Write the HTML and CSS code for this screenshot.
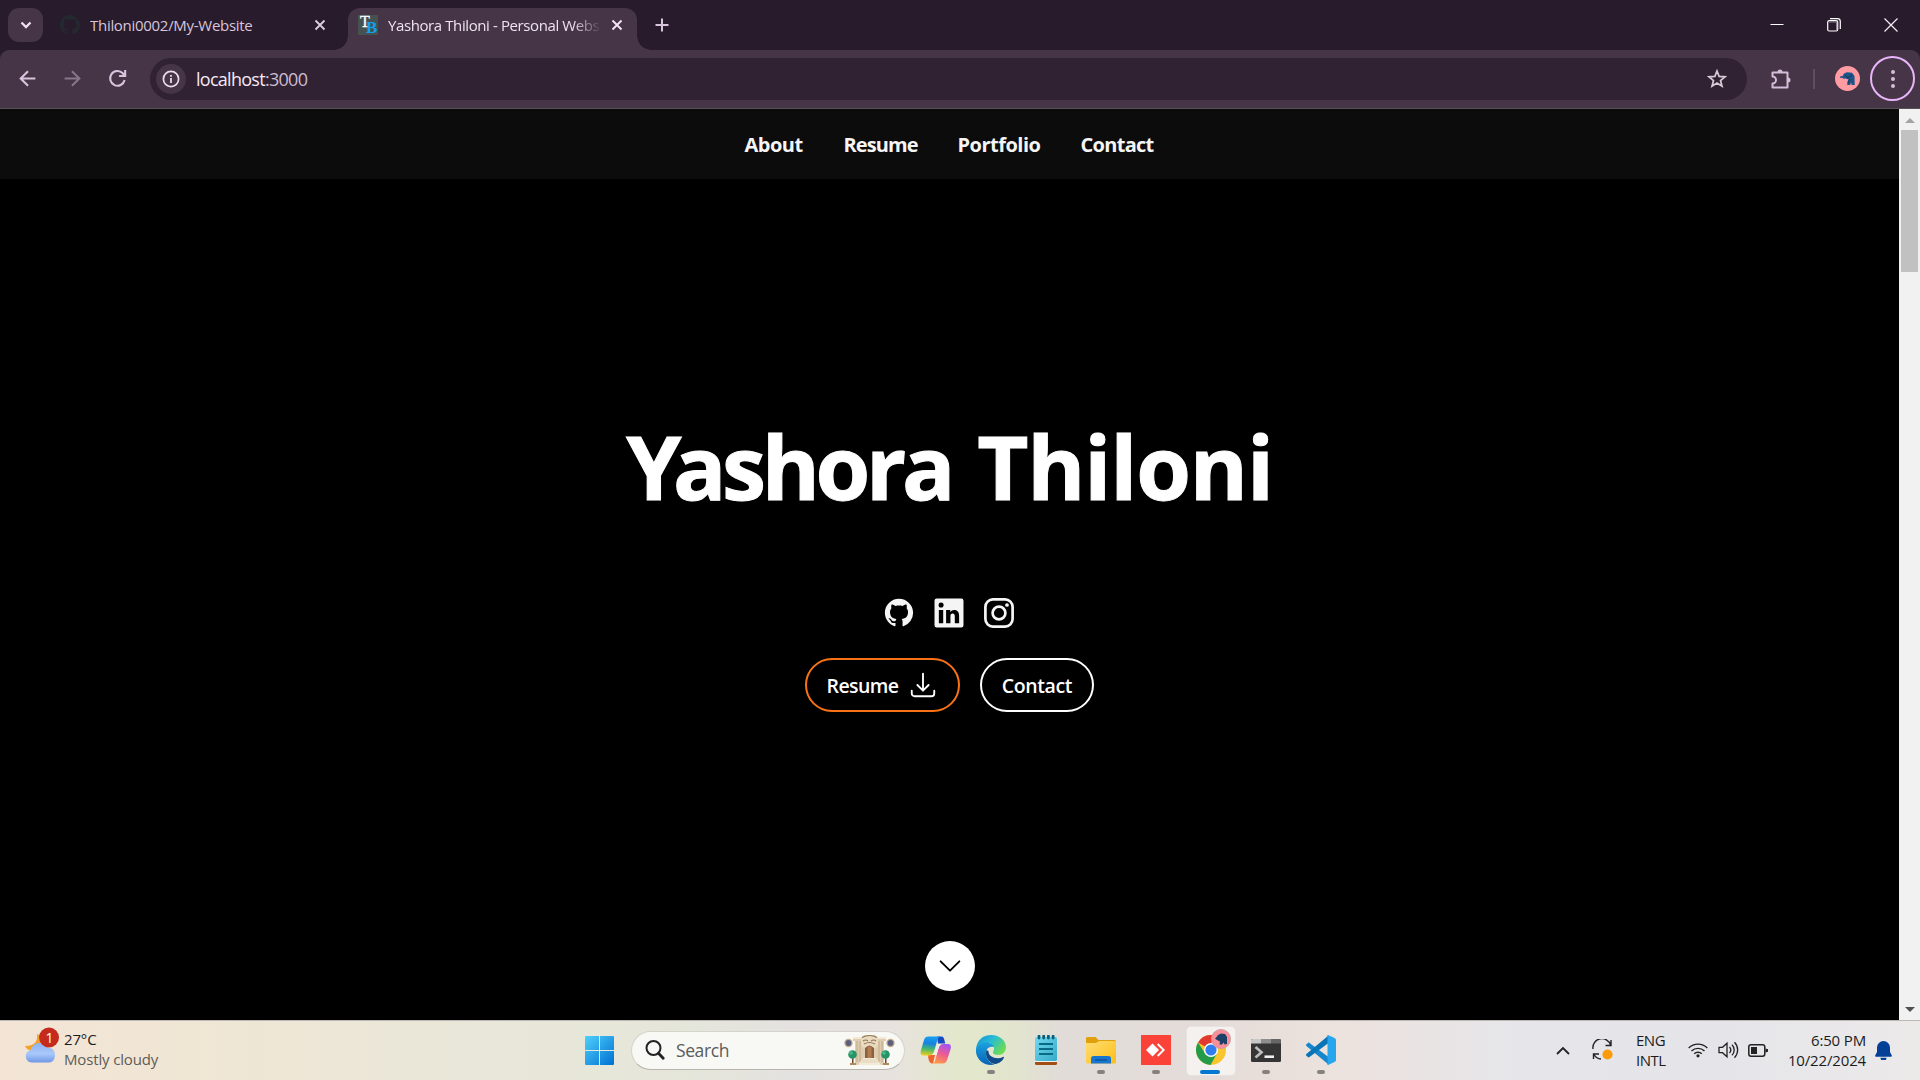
FILE: index.html
```
<!DOCTYPE html>
<html lang="en">
<head>
<meta charset="utf-8">
<title>Yashora Thiloni - Personal Website</title>
<link rel="stylesheet" href="styles.css">
</head>
<body>
<div class="screen">
  <div class="tabstrip">
    <div class="tab-search"><svg width="12" height="8" viewBox="0 0 12 8"><path d="M1.5 1.5 6 6l4.500-4.500" fill="none" stroke="#efe0f0" stroke-width="2.300"/></svg></div>
    <div class="tab">
      <svg class="favicon" viewBox="0 0 16 16"><path fill="#24292f" d="M8 0C3.580 0 0 3.580 0 8c0 3.540 2.290 6.530 5.470 7.590.4.070.550-.170.550-.380 0-.190-.010-.820-.010-1.490-2.010.370-2.530-.490-2.690-.940-.090-.230-.480-.940-.820-1.130-.280-.150-.680-.520-.010-.530.630-.010 1.080.580 1.230.820.720 1.210 1.870.870 2.330.660.070-.520.280-.870.510-1.070-1.780-.2-3.640-.890-3.640-3.950 0-.870.310-1.590.820-2.150-.080-.2-.360-1.020.080-2.120 0 0 .670-.210 2.200.820.640-.180 1.320-.270 2-.270s1.360.090 2 .270c1.530-1.040 2.200-.820 2.200-.820.440 1.100.160 1.920.080 2.120.510.560.820 1.270.820 2.150 0 3.070-1.870 3.750-3.650 3.950.290.250.540.730.540 1.480 0 1.070-.010 1.930-.010 2.200 0 .210.150.460.550.380A8.010 8.010 0 0016 8c0-4.420-3.580-8-8-8z"/></svg>
      <span class="tab-title">Thiloni0002/My-Website</span>
      <svg class="tab-close" viewBox="0 0 12 12"><path d="M1.500 1.500l9 9M10.500 1.500l-9 9" stroke="#dccbe0" stroke-width="1.900"/></svg>
    </div>
    <div class="tab tab-active">
      <div class="favicon tb"><span class="tb-t">T</span><span class="tb-b">B</span></div>
      <span class="tab-title">Yashora Thiloni - Personal Webs</span>
      <svg class="tab-close" viewBox="0 0 12 12"><path d="M1.500 1.500l9 9M10.500 1.500l-9 9" stroke="#f4e6f4" stroke-width="1.900"/></svg>
    </div>
    <svg class="tab-new" viewBox="0 0 14 14"><path d="M7 .5v13M.5 7h13" stroke="#d8c4dc" stroke-width="2"/></svg>
    <div class="win-controls">
      <svg width="14" height="14" viewBox="0 0 14 14"><path d="M.5 6.500h13" stroke="#fff" stroke-width="1"/></svg>
      <svg width="14" height="14" viewBox="0 0 14 14" fill="none" stroke="#fff" stroke-width="1.200"><rect x=".7" y="2.700" width="10" height="10.300" rx="1.500"/><path d="M3 .7h7.500a2.800 2.800 0 012.800 2.800V11"/><path d="M2 4h7.600v8" stroke="#8d8190"/></svg>
      <svg width="14" height="14" viewBox="0 0 14 14"><path d="M.5.5l13 13M13.500.5l-13 13" stroke="#f4eef4" stroke-width="1.200"/></svg>
    </div>
  </div>

  <div class="toolbar">
    <svg class="tool" viewBox="0 0 20 20" fill="none" stroke="#d8c4dc" stroke-width="2"><path d="M17.500 10H4M10.500 3L3.500 10l7 7"/></svg>
    <svg class="tool" viewBox="0 0 20 20" fill="none" stroke="#86768a" stroke-width="2"><path d="M2.500 10H16M9.500 3l7 7-7 7"/></svg>
    <svg class="tool" viewBox="0 0 20 20" fill="none" stroke="#d8c4dc" stroke-width="2"><path d="M16.800 11.500A7 7 0 1115 5l1.700 2.200M17.300 2v5.600h-5.800"/></svg>
    <div class="omnibox">
      <div class="site-info"><svg width="18" height="18" viewBox="0 0 18 18"><circle cx="9" cy="9" r="7.600" fill="none" stroke="#eadcec" stroke-width="1.700"/><path d="M9 8v5M9 5v1.800" stroke="#eadcec" stroke-width="1.800"/></svg></div>
      <span class="url">localhost<span class="port">:3000</span></span>
      <svg class="star" viewBox="0 0 20 20"><path d="M10 2l2.100 5.400 5.900.4-4.500 3.700 1.500 5.700-5-3.200-5 3.200 1.500-5.700L2 7.800l5.900-.4z" fill="none" stroke="#d8cbd9" stroke-width="1.700"/></svg>
    </div>
    <svg class="puzzle" viewBox="0 0 22 22"><path d="M2.500 4.500h15v15h-15v-4a3.300 3.300 0 000-7z" fill="none" stroke="#d3bdd8" stroke-width="2" stroke-linejoin="round"/><path d="M7.500 4a2.500 2.500 0 015 0zM18 9.500a2.500 2.500 0 010 5z" fill="#d3bdd8"/></svg>
    <i class="separator"></i>
    <svg class="avatar" viewBox="0 0 25 25"><circle cx="12.500" cy="12.500" r="12.500" fill="#ff9ca3"/><path d="M5 12l.5-2 2 .3L9 7.500l3-1.300 5 .6 2.500 3.200.2 9h-3l-.7-2.500-.8 2.500h-3l.3-3.500 1-2-3-1-2 .2-1.500-1z" fill="#1c5487"/><path d="M10 9l3 3 4-3M13 17l2-4" fill="none" stroke="#143454"/></svg>
    <div class="menu"><i></i><i></i><i></i></div>
  </div>

  <div class="viewport">
    <div class="page">
      <nav class="nav">
        <a class="n1">About</a><a class="n2">Resume</a><a class="n3">Portfolio</a><a class="n4">Contact</a>
      </nav>
      <main class="hero">
        <h1><span class="initial">Y</span><span class="first">ashora</span> <span class="last">Thiloni</span></h1>
        <div class="socials">
          <svg width="30" height="30" viewBox="-.500 -.400 17 17"><path fill="#f5f5f5" d="M8 0C3.580 0 0 3.580 0 8c0 3.540 2.290 6.530 5.470 7.590.4.070.550-.170.550-.380 0-.190-.010-.820-.010-1.490-2.010.370-2.530-.490-2.690-.940-.090-.230-.480-.940-.820-1.130-.280-.150-.680-.520-.010-.530.630-.010 1.080.580 1.230.820.720 1.210 1.870.870 2.330.660.070-.520.280-.870.510-1.070-1.780-.2-3.640-.890-3.640-3.950 0-.870.310-1.590.820-2.150-.080-.2-.360-1.020.080-2.120 0 0 .670-.210 2.200.820.640-.180 1.320-.270 2-.270s1.360.090 2 .270c1.530-1.040 2.200-.820 2.200-.820.440 1.100.160 1.920.080 2.120.510.560.820 1.270.820 2.150 0 3.070-1.870 3.750-3.650 3.950.290.250.540.730.540 1.480 0 1.070-.010 1.930-.010 2.200 0 .210.150.460.550.380A8.010 8.010 0 0016 8c0-4.420-3.580-8-8-8z"/></svg>
          <svg width="30" height="30" viewBox="1.650 1.650 20.700 20.700"><path fill="#f5f5f5" d="M20.500 2h-17A1.500 1.500 0 002 3.500v17A1.500 1.500 0 003.500 22h17a1.500 1.500 0 001.500-1.500v-17A1.500 1.500 0 0020.500 2zM8 19H5v-9h3zM6.500 8.250A1.750 1.750 0 118.300 6.500a1.780 1.780 0 01-1.800 1.750zM19 19h-3v-4.740c0-1.420-.6-1.930-1.380-1.930A1.740 1.740 0 0013 14.190V19h-3v-9h2.900v1.300a3.110 3.110 0 012.700-1.400c1.550 0 3.360.860 3.360 3.660z"/></svg>
          <svg width="30" height="30" viewBox="0 0 30 30" fill="none" stroke="#f5f5f5" stroke-width="2.700"><rect x="1.400" y="1.400" width="27.200" height="27.200" rx="7.500"/><circle cx="15" cy="15" r="6.400"/><circle cx="23" cy="7" r="1.850" fill="#f5f5f5" stroke="none"/></svg>
        </div>
        <div class="actions">
          <a class="btn btn-resume">Resume <svg width="30" height="30" viewBox="0 0 24 24" fill="none" stroke="#fff" stroke-width="1.500" stroke-linecap="round" stroke-linejoin="round"><path d="M3 16.500v2.250A2.250 2.250 0 005.250 21h13.500A2.250 2.250 0 0021 18.750V16.500M16.500 12L12 16.500 7.500 12M12 16.500V3"/></svg></a>
          <a class="btn btn-contact">Contact</a>
        </div>
        <a class="scroll-down"><svg width="30" height="30" viewBox="0 0 24 24" fill="none" stroke="#000" stroke-width="1.500" stroke-linecap="round" stroke-linejoin="round"><path d="M19.500 8.250l-7.500 7.500-7.500-7.500"/></svg></a>
      </main>
    </div>
    <div class="scrollbar">
      <div class="sb-arrow"><svg width="10" height="5" viewBox="0 0 10 5"><path d="M0 5l5-5 5 5z" fill="#a3a3a3"/></svg></div>
      <div class="sb-thumb"></div>
      <div class="sb-arrow sb-down"><svg width="10" height="5" viewBox="0 0 10 5"><path d="M0 0l5 5 5-5z" fill="#505050"/></svg></div>
    </div>
  </div>

  <div class="taskbar">
    <div class="weather">
      <svg width="35" height="38" viewBox="0 0 35 38">
        <defs><linearGradient id="cloud" x1="0" y1="0" x2="0" y2="1"><stop offset="0" stop-color="#8fb2f3"/><stop offset=".55" stop-color="#a9c8fa"/><stop offset="1" stop-color="#6f97e6"/></linearGradient></defs>
        <path d="M12 7c1 8-3 12-12 12 2 5 9 7 14 2s4-12-2-14z" fill="#f3a32b"/>
        <path d="M6.500 35.500a6.200 6.200 0 01-1-12.200C7 18.500 10.500 16 15 16c4 0 7 2 8.500 5 4-.6 6.500 3 6.500 7 0 4.500-2.500 7.500-6 7.500z" fill="url(#cloud)"/>
        <circle cx="24" cy="10.500" r="10" fill="#c42b1c"/>
        <text x="24.500" y="15.500" text-anchor="middle" class="badge-num">1</text>
      </svg>
      <div class="weather-text"><span>27°C</span><span class="muted">Mostly cloudy</span></div>
    </div>

    <div class="dock">
      <div class="cell"><svg width="29" height="29" viewBox="0 0 29 29"><defs><linearGradient id="win" gradientUnits="userSpaceOnUse" x1="0" y1="0" x2="29" y2="29"><stop offset="0" stop-color="#4fd0fb"/><stop offset="1" stop-color="#0070d2"/></linearGradient></defs><path d="M1 0h13v14H0V1a1 1 0 011-1zM15 0h13a1 1 0 011 1v13H15zM0 15h14v14H1a1 1 0 01-1-1zM15 15h14v13a1 1 0 01-1 1H15z" fill="url(#win)"/></svg></div>
      <div class="search">
        <svg class="lens" viewBox="0 0 20 20" fill="none" stroke="#222" stroke-width="2"><circle cx="8.500" cy="8" r="7"/><path d="M13.500 13.200l4.700 5" stroke-width="2.800" stroke-linecap="round"/></svg>
        <span>Search</span>
        <svg class="temple" viewBox="0 0 52 32">
          <circle cx="4.500" cy="9" r="4.200" fill="#c9ab85"/><circle cx="4.500" cy="9" r="2.900" fill="#5a5f80"/>
          <circle cx="46.500" cy="9" r="4.200" fill="#c9ab85"/><circle cx="46.500" cy="9" r="2.900" fill="#5a5f80"/>
          <path d="M9 3h9l2-2h11l2 2h9v4h-2v24H11V7H9z" fill="#decdb0"/>
          <path d="M9 3h9v2H9zM33 3h9v2h-9z" fill="#f3e8d2"/>
          <path d="M13 7v21M16 7v21M35 7v21M38 7v21" stroke="#c3aa88" stroke-width="1"/>
          <path d="M17 4q8.500-4 17 0v7q-2 4-4 3V24h-9V14q-2 0-4-3z" fill="#eadbc0"/>
          <path d="M18 3.500q7.500-4 15 0M19 7q3-2 5 0M27 7q3-2 5 0M20 10q5.500-3 11 0" fill="none" stroke="#917958" stroke-width="1.200"/>
          <path d="M21 24V14q4.500-5 9 0v10z" fill="#8d6040"/><path d="M23.500 24V12.500h4V24z" fill="#b07c52"/>
          <path d="M19 24h13l5 7H14z" fill="#f4ead8"/><path d="M18 26h15M17 28h17" stroke="#ddcbae" stroke-width=".8"/>
          <path d="M8 22h1.500v8H8zM41 22h1.500v8H41z" fill="#6b482c"/><path d="M6 29h6v2H6zM39 29h6v2h-6z" fill="#ae8a5c"/>
          <circle cx="8.500" cy="20.500" r="4.300" fill="#279467"/><circle cx="41.500" cy="20.500" r="4.300" fill="#279467"/><circle cx="7" cy="19" r="1.800" fill="#45bb87"/><circle cx="40" cy="19" r="1.800" fill="#45bb87"/>
        </svg>
      </div>
      <div class="apps">
        <div class="cell"><svg width="31" height="30" viewBox="0 0 31 30"><defs><linearGradient id="cp1" x1=".3" y1="0" x2=".2" y2="1"><stop offset="0" stop-color="#189fef"/><stop offset=".35" stop-color="#1783df"/><stop offset=".65" stop-color="#48b86b"/><stop offset="1" stop-color="#f4cf1c"/></linearGradient><linearGradient id="cp2" x1=".7" y1="0" x2=".3" y2="1"><stop offset="0" stop-color="#a452f0"/><stop offset=".5" stop-color="#ee5c91"/><stop offset="1" stop-color="#ff9a45"/></linearGradient></defs>
          <path d="M17 1.500h4.500c2 0 2.500 2 3 4l.8 3H18z" fill="#1749c2"/><path d="M8 20h7l-2 8.500c-3 0-4-2-4.600-5z" fill="#f2622d"/>
          <path d="M8.500 1.500H21c-2 0-3 1.300-3.600 3.500L14 16.500c-.8 2.700-2 4-5 4H3.500C.5 20.500.2 18 1 15L4 5c.8-2.500 2-3.500 4.500-3.500z" fill="url(#cp1)"/>
          <path d="M22.500 28.500H12c2 0 2.700-1.300 3.300-3.500L18.500 13c.8-2.700 2-4 5-4H28c3 0 3.300 2.500 2.500 5.500L27 25c-.8 2.500-2 3.500-4.500 3.500z" fill="url(#cp2)"/><path d="M17.500 9.500h4c-1.700.7-2.400 2-3 4l-2 6.500h-5c1.700-.7 2.400-2 3-4z" fill="#f1eee6"/></svg></div>
        <div class="cell"><svg width="30" height="30" viewBox="0 0 30 30"><defs><linearGradient id="ed1" x1="0" y1="0" x2="1" y2=".6"><stop offset="0" stop-color="#168fd6"/><stop offset=".5" stop-color="#27bcd3"/><stop offset="1" stop-color="#6bdc54"/></linearGradient><linearGradient id="ed2" x1="0" y1="0" x2="0" y2="1"><stop offset="0" stop-color="#1aa1df"/><stop offset="1" stop-color="#0863b8"/></linearGradient></defs>
          <path d="M0 14C1 5 7 0 15 0c9 0 15 6 15 12 0 5-3.500 8-8 8-3 0-5-1-5-2.500 0-1 1-1.500 1-4C18 10 14 8 10 8c-5 0-9 3-10 6z" fill="url(#ed1)"/>
          <path d="M0 14c1-4 5-6.500 9.500-6.500 3.500 0 7.500 1.500 8.500 4.500-5-1-8 2-8 6 0 6 4.500 11 9 11.500C8 32-1 24 0 14z" fill="url(#ed2)"/>
          <path d="M10.500 15C8 23 15 29.500 20 29c3.500-.8 7-3.500 8-6.500.2-.7-.3-.8-1-.4-6 3-15 0-14.500-6z" fill="#114a8b"/></svg><i class="run"></i></div>
        <div class="cell"><svg width="22" height="30" viewBox="0 0 22 30"><defs><linearGradient id="np" x1="0" y1="0" x2="1" y2="1"><stop offset="0" stop-color="#73d8ee"/><stop offset="1" stop-color="#35abc9"/></linearGradient></defs><path d="M0 26h22v2.500a1.500 1.500 0 01-1.500 1.500h-19A1.500 1.500 0 010 28.500z" fill="#a34e13"/><path d="M0 25h22v2H0z" fill="#f2f2f2"/><rect y="2" width="22" height="24" rx="1.500" fill="url(#np)"/><path d="M4 9h14M4 14h14M4 19h14" stroke="#096a83" stroke-width="2"/><path d="M4 1v2M8.700 1v2M13.400 1v2M18.100 1v2" stroke="#08607a" stroke-width="2.800" stroke-linecap="round"/></svg></div>
        <div class="cell"><svg width="30" height="30" viewBox="0 0 30 30"><defs><linearGradient id="fo" x1="0" y1="0" x2="1" y2="1"><stop offset="0" stop-color="#ffdd73"/><stop offset="1" stop-color="#fcbe16"/></linearGradient></defs><path d="M0 3.500A1.500 1.500 0 011.500 2h8l3 3H29l1 2v5H0z" fill="#dfa00b"/><path d="M0 8h10l3-2h15.500A1.500 1.500 0 0130 7.500V27a1.500 1.500 0 01-1.500 1.500h-27A1.500 1.500 0 010 27z" fill="url(#fo)"/><path d="M5 28.500v-5a2.500 2.500 0 012.500-2.500h15a2.500 2.500 0 012.500 2.500v5z" fill="#1777d0"/><path d="M9 25h12" stroke="#0c4e94" stroke-width="1.300"/></svg><i class="run"></i></div>
        <div class="cell"><svg width="30" height="30" viewBox="0 0 30 30"><path d="M0 0h30v30H0z" fill="#fb4238"/><path d="M11.500 8.500L18 15l-6.500 6.500L5 15z" fill="#fff"/><path d="M16 9.700l1.300-1.400L24 15l-6.700 6.700-1.300-1.400L21.300 15z" fill="#fff"/></svg><i class="run"></i></div>
        <div class="cell active"><svg width="30" height="30" viewBox="0 0 30 30"><circle cx="15" cy="15" r="15" fill="#f9c52d"/><path d="M15 15L2 7.500A15 15 0 0128 7.500H15z" fill="#e1392f"/><path d="M2 7.500A15 15 0 0014.500 30l6.500-11.500-12-.2z" fill="#249b48"/><circle cx="15" cy="15" r="7" fill="#fff"/><circle cx="15" cy="15" r="5.600" fill="#2f7def"/></svg>
          <svg class="chrome-badge" viewBox="0 0 20 20"><circle cx="10" cy="10" r="9.600" fill="#f98f99" stroke="#c89a9f" stroke-width=".8"/><path d="M4 9.500l1.500-1.500L7 6l3-1.500 4 .5 2 3v7l-2.500.5-.8-2L11 15.500H8.500L9 12.500 6 11z" fill="#1d4166"/></svg><i class="run run-wide"></i></div>
        <div class="cell"><svg width="30" height="23" viewBox="0 0 30 23"><rect width="30" height="23" rx="1.500" fill="#353535"/><path d="M1.500 0H10v4.500H0v-3A1.500 1.500 0 011.500 0z" fill="#c7c7c7"/><path d="M10 0h10v4.500H10z" fill="#8e8e8e"/><path d="M20 0h8.500A1.500 1.500 0 0130 1.500v3H20z" fill="#666"/><path d="M4.500 8l6 5.300-6 5.300" fill="none" stroke="#bcbcbc" stroke-width="2.700"/><path d="M13.500 17.700H23" stroke="#f2f2f2" stroke-width="2.600"/></svg><i class="run"></i></div>
        <div class="cell"><svg width="30" height="30" viewBox="0 0 30 30"><path d="M.4 11c-.5-.6-.5-1.200 0-1.700L2 7.900c.5-.5 1-.4 1.500 0L22.500 22v7.500z" fill="#1687ce"/><path d="M.4 19c-.5.6-.5 1.200 0 1.700L2 22.100c.5.500 1 .4 1.500 0L22.500 8V.5z" fill="#0875b8"/><path d="M22 0l6.500 3A2.500 2.500 0 0130 5v20a2.500 2.500 0 01-1.500 2L22 30c-.8-.2-1-1-.5-2V2c-.5-1-.3-1.800.5-2z" fill="#27a5ed"/></svg><i class="run"></i></div>
      </div>
    </div>

    <div class="tray">
      <svg class="t-chev" width="14" height="9" viewBox="0 0 14 9"><path d="M1 8l6-6 6 6" fill="none" stroke="#222" stroke-width="1.800"/></svg>
      <svg class="t-sync" width="22" height="22" viewBox="0 0 22 22"><path d="M1 10A9 9 0 0118.500 6M19 1v5.500h-5.500M1.500 20v-5H7M2 15.500a9 9 0 007 4.500" fill="none" stroke="#222" stroke-width="1.400"/><circle cx="15.500" cy="15.500" r="5.100" fill="#fb9a0a"/></svg>
      <div class="lang"><span class="eng">ENG</span><span class="intl">INTL</span></div>
      <svg class="t-wifi" width="20" height="16" viewBox="0 0 20 16" fill="none" stroke="#222" stroke-width="1.400"><path d="M.7 6a13.200 13.200 0 0118.600 0M3.500 9a9.300 9.300 0 0113 0M6.200 11.800a5.400 5.400 0 017.600 0"/><circle cx="10" cy="13.800" r="1.600" fill="#222" stroke="none"/></svg>
      <svg class="t-vol" width="21" height="18" viewBox="0 0 21 18" fill="none" stroke="#222" stroke-width="1.300"><path d="M1 6.300h3.500l4.500-4v13.400l-4.500-4H1zM11.500 6a4.500 4.500 0 010 6M14 3.700a7.500 7.500 0 010 10.600M16.500 1.300a11 11 0 010 15.400"/></svg>
      <svg class="t-bat" width="20" height="13" viewBox="0 0 20 13"><rect x=".8" y=".8" width="16" height="11.400" rx="2.200" fill="none" stroke="#222" stroke-width="1.500"/><path d="M3 3h6v7H3zM17.500 4.500l2.500.7v2.600l-2.500.7z" fill="#222"/></svg>
      <div class="clock"><span class="time">6:50 PM</span><span class="date">10/22/2024</span></div>
      <svg class="t-bell" width="17" height="19" viewBox="0 0 17 19"><path d="M8.500 0a6.500 6.500 0 016.500 6.500V11l1.800 3.500c.2.700-.1 1.200-.8 1.200H1c-.7 0-1-.5-.8-1.200L2 11V6.500A6.500 6.500 0 018.500 0zM5.500 16.800h6a3 3 0 01-6 0z" fill="#043f98"/></svg>
    </div>
  </div>
</div>
</body>
</html>
```
FILE: styles.css
```
* { box-sizing: border-box; }
body { margin: 0; overflow: hidden; background: #000; font-family: "Open Sans", "Noto Sans", sans-serif; }
svg { display: block; flex: none; }
.screen { display: flex; flex-direction: column; width: 1920px; height: 1080px; background: linear-gradient(#281b2b 80px, #000 80px); }

/* Tab strip */
.tabstrip { display: flex; align-items: center; height: 50px; padding-left: 8px; background: #281b2b; }
.tab-search { display: flex; align-items: center; justify-content: center; width: 35px; height: 34px; border-radius: 11px; background: #453547; }
.tab { display: flex; align-items: center; height: 42px; width: 298px; margin-left: 7px; padding: 0 22px 0 10px; }
.favicon { width: 20px; height: 20px; flex: none; }
.tab-title { flex: 1; margin-left: 10px; overflow: hidden; white-space: nowrap; font-size: 15px; line-height: 20px; letter-spacing: -.29px; color: #d8c4dc; }
.tab-close { width: 12px; height: 12px; }
.tab-active { position: relative; align-self: flex-end; width: 289px; margin-left: 0; padding-right: 14px; border-radius: 12px 12px 0 0; background: #453547; }
.tab-active::before, .tab-active::after { content: ""; position: absolute; bottom: 0; width: 14px; height: 14px; }
.tab-active::before { left: -14px; background: radial-gradient(circle at 0 0, transparent 13.500px, #453547 14px); }
.tab-active::after { right: -14px; background: radial-gradient(circle at 100% 0, transparent 13.500px, #453547 14px); }
.tab-active > * { transform: translateY(-4px); }
.tab-active .tab-title { margin-right: 7px; letter-spacing: -.4px; color: #efe2f0; -webkit-mask-image: linear-gradient(90deg, #000 85%, transparent 99%); mask-image: linear-gradient(90deg, #000 85%, transparent 99%); }
.tb { position: relative; background: #465250; font-family: "Liberation Serif", serif; }
.tb-t, .tb-b { position: absolute; line-height: 16px; }
.tb-t { left: 2px; top: -1px; font-size: 16px; color: #fff; -webkit-text-stroke: .3px #fff; }
.tb-b { left: 8px; top: 5px; font-size: 17px; font-weight: bold; color: #159df0; }
.tab-new { width: 14px; height: 14px; margin-left: 18px; }
.win-controls { display: flex; gap: 43px; margin-left: auto; margin-right: 22px; }

/* Toolbar */
.toolbar { display: flex; align-items: center; height: 59px; padding: 0 5px 1px 17px; background: #453547; border-bottom: 1px solid #575057; border-radius: 9px 9px 0 0; }
.tool { width: 21px; height: 21px; margin-right: 24px; }
.omnibox { display: flex; align-items: center; width: 1597px; height: 42px; margin-left: -2px; padding: 0 20px 0 6px; border-radius: 21px; background: #302232; }
.site-info { display: flex; align-items: center; justify-content: center; width: 30px; height: 30px; border-radius: 50%; background: #453547; }
.url { margin-left: 10px; font-size: 18px; line-height: 24px; letter-spacing: -.72px; color: #f4e9f5; }
.port { color: #cdbbd0; }
.star { width: 20px; height: 20px; margin-left: auto; }
.puzzle { width: 22px; height: 22px; margin-left: 23px; }
.separator { width: 2px; height: 20px; margin-left: 21px; background: #5f4d63; }
.avatar { width: 25px; height: 25px; margin-left: 20px; }
.menu { display: flex; flex-direction: column; align-items: center; justify-content: center; gap: 3px; width: 45px; height: 45px; margin-left: auto; border: 2px solid #e9b5fa; border-radius: 50%; }
.menu i { width: 4px; height: 4px; border-radius: 50%; background: #d3bdd8; }

/* Page */
.viewport { display: flex; height: 911px; }
.page { display: flex; flex-direction: column; flex: 1; background: #000; color: #fff; }
.nav { display: flex; justify-content: center; gap: 40px; height: 70px; padding-top: 1px; background: #0c0c0c; color: #f5f5f5; font-size: 20px; font-weight: 700; line-height: 70px; white-space: nowrap; }
.nav a { letter-spacing: -.5px; }
.nav .n2 { letter-spacing: -.9px; }
.nav .n4 { letter-spacing: -.7px; }
.n1 { width: 59px; } .n2 { width: 74px; } .n3 { width: 83px; } .n4 { width: 74px; }
.hero { display: flex; flex-direction: column; align-items: center; flex: 1; padding: 242px 0 29px; }
h1 { margin: 0; font-size: 88.500px; font-weight: 700; line-height: 90px; letter-spacing: -2px; word-spacing: 5px; white-space: nowrap; -webkit-text-stroke: 1px #fff; }
.initial { letter-spacing: -8.500px; }
.first { letter-spacing: -4.300px; }
.last { letter-spacing: -1.100px; }
.socials { display: flex; gap: 20px; margin: 87px 2px 0 0; }
.actions { display: flex; gap: 20px; margin-top: 30px; }
.btn { display: flex; align-items: center; justify-content: center; height: 54px; border: 2px solid #fff; border-radius: 27px; font-size: 19.500px; font-weight: 600; letter-spacing: -.4px; white-space: nowrap; color: #fff; }
.btn-resume { gap: 10px; width: 155px; border-color: #f97316; letter-spacing: -.6px; }
.btn-contact { width: 114px; }
.scroll-down { display: flex; align-items: center; justify-content: center; width: 50px; height: 50px; margin-top: auto; border-radius: 50%; background: #fff; }
.scrollbar { display: flex; flex-direction: column; align-items: center; width: 21px; background: #f1f1f1; }
.sb-arrow { display: flex; align-items: center; justify-content: center; width: 21px; height: 21px; padding-top: 2px; }
.sb-thumb { width: 17px; height: 142px; background: #c1c1c1; }
.sb-down { margin-top: auto; padding-top: 0; }

/* Taskbar */
.taskbar { display: grid; grid-template-columns: 572px 777px 1fr; height: 60px; border-top: 1px solid #bdb8b4; color: #1c1c1c; background: linear-gradient(90deg, #f3e4d6 0, #f0e6d4 180px, #e8e7d9 500px, #e5e6da 690px, #e3e2e0 790px, #e8e2df 890px, #e3e8cb 960px, #e2e5cd 1010px, #e1dcd8 1060px, #e4dcd8 1200px, #ece2de 1340px, #e6e6ea 1520px, #e5e5e9 1720px, #ece9e9 1920px); }
.weather { display: flex; padding: 6px 0 0 25px; }
.badge-num { font-size: 14px; fill: #fff; }
.weather-text, .lang, .clock { display: flex; flex-direction: column; font-size: 15px; line-height: 20px; letter-spacing: -.35px; white-space: nowrap; }
.weather-text { margin: 2px 0 0 4px; letter-spacing: -.15px; }
.muted { color: #5f5b57; }
.dock { display: flex; align-items: center; padding-bottom: 1px; }
.cell { position: relative; display: flex; align-items: center; justify-content: center; width: 55px; height: 48px; }
.search { display: flex; align-items: center; width: 274px; height: 39px; margin-left: 4px; padding: 0 8px 0 13px; border: 1px solid #d5d3cb; border-bottom-color: #b6b4ad; border-radius: 20px; background: #f8f8f5; font-size: 17.500px; letter-spacing: -.4px; color: #5b5b5b; }
.search span { margin-left: 11px; }
.lens { width: 20px; height: 20px; }
.temple { width: 52px; height: 32px; margin-left: auto; }
.apps { display: flex; margin-left: 3px; }
.run { position: absolute; left: 23.500px; bottom: 0; width: 8px; height: 4px; border-radius: 2px; background: #85827e; }
.run-wide { left: 17px; width: 20px; background: #0078d4; }
.active::before { content: ""; position: absolute; left: 3px; top: 0; width: 48px; height: 48px; border: 1px solid #e7e3e0; border-radius: 5px; background: #f4f1ee; }
.active svg { position: relative; }
.active .chrome-badge { position: absolute; left: 28px; top: 3px; width: 20px; height: 20px; }
.tray { display: flex; align-items: center; justify-content: flex-end; padding: 0 28px 1px 0; }
.t-chev { margin-right: 22px; }
.t-sync { margin-right: 22px; }
.lang { align-items: flex-start; width: 31px; margin: -1px 21px 0 0; letter-spacing: -.5px; }
.t-wifi { margin-right: 10px; }
.t-vol { margin-right: 9px; }
.t-bat { margin-right: 20px; }
.clock { align-items: flex-end; width: 78px; margin: -1px 9px 0 0; letter-spacing: -.15px; }
```
